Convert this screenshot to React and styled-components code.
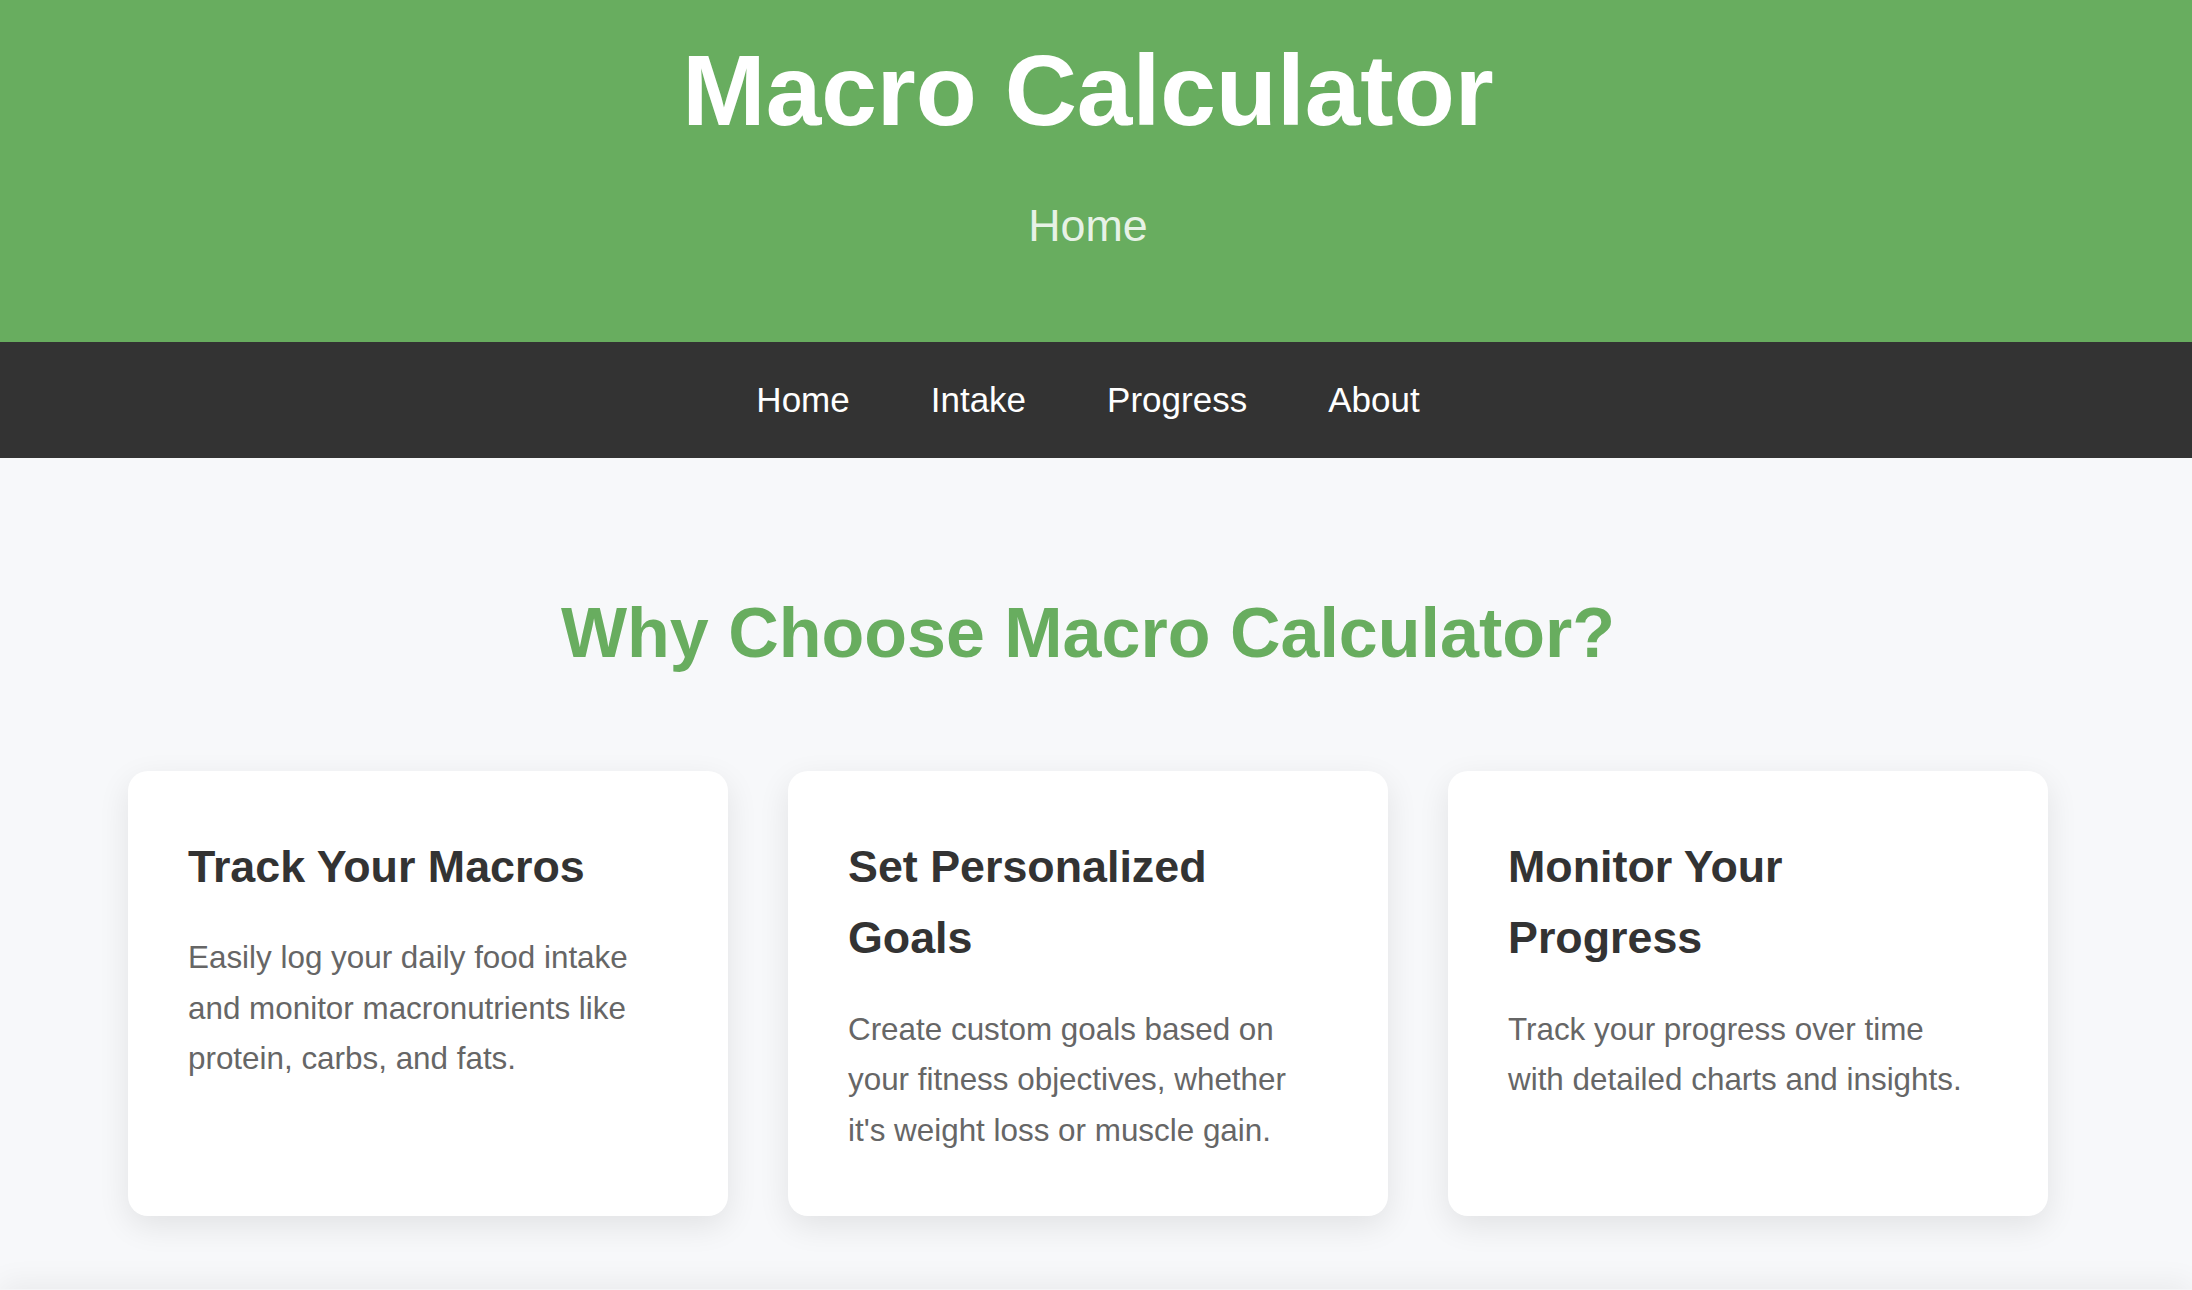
import React from 'react';
import styled, { createGlobalStyle } from 'styled-components';

const green = '#68ad5f';

const GlobalStyle = createGlobalStyle`
    * {
        box-sizing: border-box;
    }
    body {
        margin: 0;
        font-family: "Liberation Sans", Arial, Helvetica, sans-serif;
        background-color: #f7f8fa;
        line-height: 1.6;
        color: #333;
    }
`;

const Page = styled.div`
    min-height: 1290px;
    display: flex;
    flex-direction: column;
`;

const Header = styled.header`
    background-color: ${green};
    color: #fff;
    text-align: center;
    padding: 30px 16px 80px 0;
`;

const Title = styled.h1`
    margin: 0 0 40px;
    font-size: 100px;
    line-height: 120px;
    font-weight: 700;
`;

const Subtitle = styled.p`
    margin: 0;
    font-size: 44.8px;
    line-height: 1.6;
    color: rgba(255, 255, 255, 0.86);
`;

const Nav = styled.nav`
    background-color: #333;
    height: 116px;
    display: flex;
    align-items: center;
    justify-content: center;
    gap: 81px;
    padding-right: 16px;
`;

const NavLink = styled.a`
    color: #fff;
    font-size: 35px;
    text-decoration: none;
    cursor: pointer;
`;

const Main = styled.main`
    padding: 133px 16px 73px 0;
    text-align: center;
`;

const SectionTitle = styled.h2`
    margin: 0 0 96px;
    font-size: 70px;
    line-height: 1.2;
    font-weight: 700;
    color: ${green};
`;

const CardGrid = styled.div`
    display: grid;
    grid-template-columns: repeat(3, 600px);
    gap: 60px;
    justify-content: center;
    text-align: left;
`;

const Card = styled.div`
    background-color: #fff;
    border-radius: 20px;
    padding: 60px;
    box-shadow: 0 10px 32px rgba(0, 0, 0, 0.09);
`;

const CardTitle = styled.h3`
    margin: 0 0 31px;
    font-size: 44.8px;
    line-height: 1.6;
    font-weight: 700;
    color: #333;
`;

const CardText = styled.p`
    margin: 0;
    font-size: 31.4px;
    line-height: 1.6;
    color: #666;
`;

const Footer = styled.footer`
    flex: 1;
    min-height: 40px;
    background-color: #f4f5f7;
    box-shadow: 0 -6px 30px rgba(0, 0, 0, 0.06);
`;

const features = [
    {
        title: 'Track Your Macros',
        text: 'Easily log your daily food intake and monitor macronutrients like protein, carbs, and fats.',
    },
    {
        title: 'Set Personalized Goals',
        text: "Create custom goals based on your fitness objectives, whether it's weight loss or muscle gain.",
    },
    {
        title: 'Monitor Your Progress',
        text: 'Track your progress over time with detailed charts and insights.',
    },
];

const App = () => (
    <Page>
        <GlobalStyle />
        <Header>
            <Title>Macro Calculator</Title>
            <Subtitle>Home</Subtitle>
        </Header>
        <Nav>
            <NavLink>Home</NavLink>
            <NavLink>Intake</NavLink>
            <NavLink>Progress</NavLink>
            <NavLink>About</NavLink>
        </Nav>
        <Main>
            <SectionTitle>Why Choose Macro Calculator?</SectionTitle>
            <CardGrid>
                {features.map((f) => (
                    <Card key={f.title}>
                        <CardTitle>{f.title}</CardTitle>
                        <CardText>{f.text}</CardText>
                    </Card>
                ))}
            </CardGrid>
        </Main>
        <Footer />
    </Page>
);

export default App;
